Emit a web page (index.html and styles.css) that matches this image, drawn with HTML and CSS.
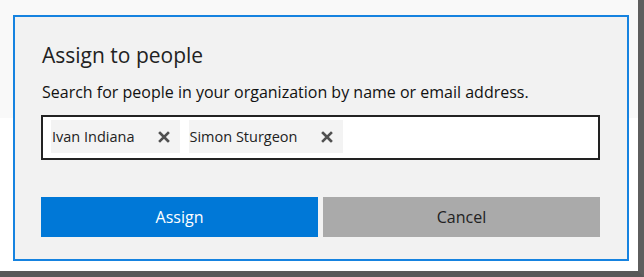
FILE: index.html
```html
<!DOCTYPE html>
<html>
<head>
<meta charset="utf-8">
<link rel="stylesheet" href="styles.css">
</head>
<body>
<div class="shot">
  <div class="dialog">
    <h1 class="title">Assign to people</h1>
    <p class="desc">Search for people in your organization by name or email address.</p>
    <div class="picker">
      <span class="chip"><span class="chip-name">Ivan Indiana</span><svg class="chip-x" width="12" height="12" viewBox="0 0 12 12"><path d="M2 2 L10 10 M10 2 L2 10" stroke="#505050" stroke-width="2.6" stroke-linecap="square"/></svg></span>
      <span class="chip"><span class="chip-name">Simon Sturgeon</span><svg class="chip-x" width="12" height="12" viewBox="0 0 12 12"><path d="M2 2 L10 10 M10 2 L2 10" stroke="#505050" stroke-width="2.6" stroke-linecap="square"/></svg></span>
    </div>
    <div class="actions">
      <button class="btn btn-primary">Assign</button>
      <button class="btn btn-secondary">Cancel</button>
    </div>
  </div>
</div>
</body>
</html>
```

FILE: styles.css
```css
html, body {
  margin: 0;
  padding: 0;
  background: #ffffff;
}
.shot {
  box-sizing: border-box;
  width: 644px;
  height: 277px;
  padding: 15px 0 0 13px;
  background: linear-gradient(#f9f9f9 0, #f9f9f9 118px, #ffffff 118px);
  border-right: 6px solid #5e5e5e;
  border-bottom: 6px solid #585858;
  font-family: "Segoe UI", "Open Sans", "Noto Sans", sans-serif;
}
.dialog {
  box-sizing: border-box;
  width: 616px;
  height: 246px;
  border: 2px solid #1683e0;
  background: #f2f2f2;
  padding: 0 27px 0 26px;
  display: flex;
  flex-direction: column;
}
.title {
  margin: 24px 0 0 1px;
  font-size: 21px;
  font-weight: 400;
  line-height: 28px;
  color: #222;
}
.desc {
  margin: 13px 0 0 1px;
  font-size: 16px;
  line-height: 20px;
  color: #111;
}
.picker {
  box-sizing: border-box;
  margin-top: 13px;
  height: 45px;
  border: 2px solid #222;
  background: #fff;
  padding: 3px 0 0 8px;
  display: flex;
  align-items: flex-start;
  gap: 9px;
}
.chip {
  display: flex;
  align-items: center;
  height: 33px;
  background: #f3f3f3;
  padding: 0 10px 0 1px;
  gap: 23px;
}
.chip-name {
  font-size: 14.5px;
  color: #222;
}
.chip-x {
  display: block;
}
.actions {
  margin-top: 37px;
  display: flex;
  gap: 5px;
}
.btn {
  flex: 1;
  height: 40px;
  border: none;
  margin: 0;
  font-family: inherit;
  font-size: 16px;
  cursor: pointer;
}
.btn-primary {
  background: #0078d7;
  color: #fff;
}
.btn-secondary {
  background: #aaaaaa;
  color: #222;
}
```
